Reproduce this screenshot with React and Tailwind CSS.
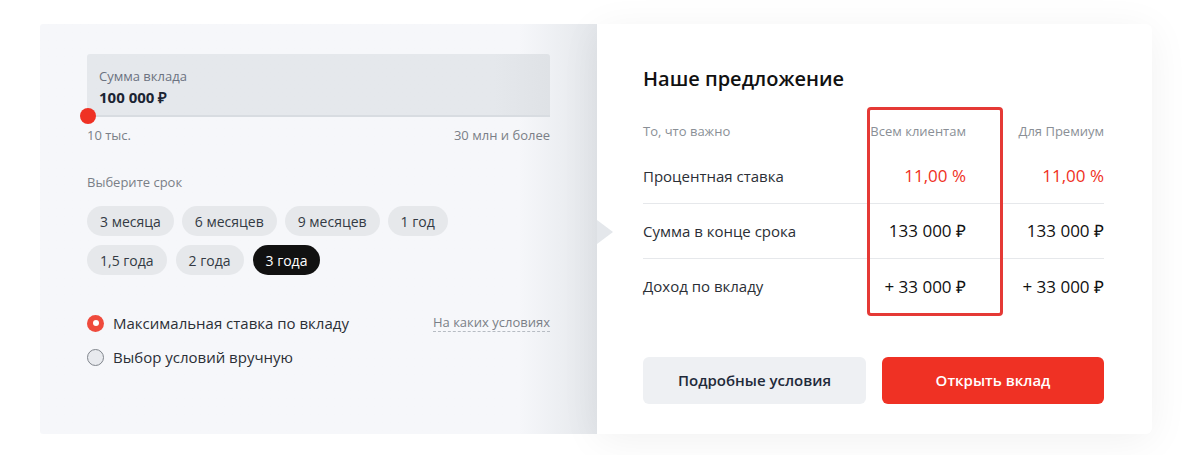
const TERMS_ROW1 = ['3 месяца', '6 месяцев', '9 месяцев', '1 год']
const TERMS_ROW2 = ['1,5 года', '2 года', '3 года']

const ROWS = [
  { label: 'Процентная ставка', all: '11,00 %', premium: '11,00 %', red: true },
  { label: 'Сумма в конце срока', all: '133 000 ₽', premium: '133 000 ₽' },
  { label: 'Доход по вкладу', all: '+ 33 000 ₽', premium: '+ 33 000 ₽' },
]

function Chip({ label, active }) {
  return (
    <button
      className={
        active
          ? 'h-[30px] px-[13px] rounded-full bg-[#111111] text-white text-[14px]'
          : 'h-[30px] px-[13px] rounded-full bg-[#e6e8eb] text-[#333a44] text-[14px]'
      }
    >
      {label}
    </button>
  )
}

export default function App() {
  return (
    <div className="w-[1200px] h-[455px] bg-white pt-[24px] pl-[40px] font-['Open_Sans',sans-serif]">
      <div className="flex">

        {/* Left: calculator */}
        <div className="relative w-[557px] h-[410px] rounded-l-[3px] bg-gradient-to-r from-[#f6f7fa] from-[86%] to-[#e4e7eb] pt-[30px] px-[47px]">

          {/* Amount field */}
          <div className="relative h-[63px] rounded-t-[3px] bg-gradient-to-r from-[#e5e8ec] from-[88%] to-[#dfe2e6] border-b-2 border-[#d8dce1] px-3 pt-[14px]">
            <p className="text-[13px] leading-[16px] text-[#6b7280]">Сумма вклада</p>
            <p className="mt-[4px] text-[15px] leading-[18px] font-bold text-[#1b2433]">100 000 ₽</p>
            <span className="absolute left-[-7px] bottom-[-9px] w-4 h-4 rounded-full bg-[#ef3124]" />
          </div>

          <div className="mt-[10px] flex justify-between text-[13px] leading-[16px] text-[#7a7f87]">
            <span>10 тыс.</span>
            <span>30 млн и более</span>
          </div>

          <p className="mt-[31px] text-[13px] leading-[16px] text-[#7a7f87]">Выберите срок</p>

          <div className="mt-[16px] flex flex-col gap-[9px]">
            <div className="flex gap-[8px]">
              {TERMS_ROW1.map((t) => <Chip key={t} label={t} />)}
            </div>
            <div className="flex gap-[9px]">
              {TERMS_ROW2.map((t) => <Chip key={t} label={t} active={t === '3 года'} />)}
            </div>
          </div>

          {/* Mode */}
          <div className="mt-[38px] flex flex-col gap-[14px]">
            <div className="flex items-center justify-between h-[20px]">
              <label className="flex items-center gap-[9px] text-[15px] text-[#2b2f36]">
                <span className="w-[17px] h-[17px] rounded-full bg-[#ef4a3c] flex items-center justify-center">
                  <span className="w-[6px] h-[6px] rounded-full bg-white" />
                </span>
                Максимальная ставка по вкладу
              </label>
              <span className="text-[13px] text-[#7a7f87] border-b border-dashed border-[#b7bcc3] leading-[17px]">
                На каких условиях
              </span>
            </div>
            <label className="flex items-center gap-[9px] h-[20px] text-[15px] text-[#2b2f36]">
              <span className="w-[17px] h-[17px] rounded-full bg-[#e8eaee] border border-[#80858c]" />
              Выбор условий вручную
            </label>
          </div>

          {/* Notch */}
          <span className="absolute right-[-16px] top-[196px] w-0 h-0 border-y-[12px] border-y-transparent border-l-[16px] border-l-[#e4e7eb] z-10" />
        </div>

        {/* Right: offer */}
        <div className="relative w-[555px] h-[410px] bg-white rounded-r-[6px] shadow-[0_6px_40px_rgba(0,0,0,0.06)] pt-[41px] pl-[46px] pr-[48px]">
          <h2 className="text-[20px] leading-[28px] font-semibold text-[#111111]">Наше предложение</h2>

          <div className="mt-[30px] grid grid-cols-[1fr_140px_138px] text-[13px] leading-[16px] text-[#8a8f96]">
            <span>То, что важно</span>
            <span className="text-right">Всем клиентам</span>
            <span className="text-right">Для Премиум</span>
          </div>

          <div className="mt-[10px]">
            {ROWS.map((r, i) => (
              <div
                key={r.label}
                className={
                  i < ROWS.length - 1
                    ? 'grid grid-cols-[1fr_140px_138px] items-center h-[55px] border-b border-[#e6e8eb]'
                    : 'grid grid-cols-[1fr_140px_138px] items-center h-[55px]'
                }
              >
                <span className="text-[15px] text-[#2b2f36]">{r.label}</span>
                <span className={r.red ? 'text-right text-[17px] text-[#ef3124]' : 'text-right text-[17px] font-medium text-[#111111]'}>{r.all}</span>
                <span className={r.red ? 'text-right text-[17px] text-[#ef3124]' : 'text-right text-[17px] font-medium text-[#111111]'}>{r.premium}</span>
              </div>
            ))}
          </div>

          <div className="mt-[43px] flex gap-[16px]">
            <button className="w-[223px] h-[47px] rounded-[6px] bg-[#eef0f3] text-[15px] font-semibold text-[#1f2a3a]">
              Подробные условия
            </button>
            <button className="w-[222px] h-[47px] rounded-[6px] bg-[#ef3124] text-[15px] font-semibold text-white">
              Открыть вклад
            </button>
          </div>

          {/* Highlight frame */}
          <div className="absolute left-[270px] top-[83px] w-[136px] h-[209px] border-[3px] border-[#e53935] rounded-[4px] pointer-events-none" />
        </div>
      </div>
    </div>
  )
}
